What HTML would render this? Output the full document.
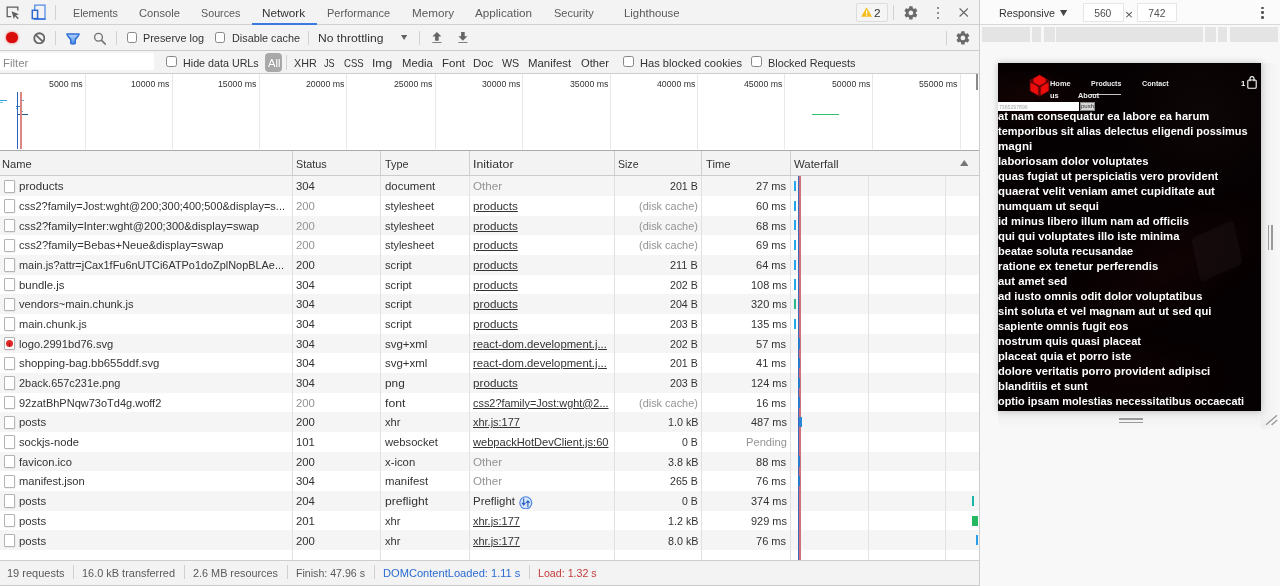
<!DOCTYPE html>
<html lang="en"><head><meta charset="utf-8"><title>DevTools - Network</title>
<style>
html,body{margin:0;padding:0;}
body{width:1280px;height:586px;overflow:hidden;position:relative;background:#f8f8f8;font-family:"Liberation Sans",sans-serif;font-size:11.24px;}
.t{position:absolute;white-space:pre;line-height:1;transform-origin:0 50%;}
#txt{position:absolute;left:0;top:0;width:1280px;height:586px;will-change:transform;filter:blur(0.3px);}
.a{position:absolute;}
</style></head>
<body>
<div class="a" style="left:979.40px;top:0.00px;width:300.60px;height:24.40px;background:#fbfbfb;"></div>
<div class="a" style="left:979.40px;top:24.25px;width:300.60px;height:1.00px;background:#d8d8d8;"></div>
<div class="a" style="left:0.00px;top:0.00px;width:978.50px;height:25.00px;background:#f3f3f3;"></div>
<div class="a" style="left:0.00px;top:24.25px;width:978.50px;height:1.00px;background:#d0d0d0;"></div>
<div class="a" style="left:0.00px;top:25.20px;width:978.50px;height:24.80px;background:#f3f3f3;"></div>
<div class="a" style="left:0.00px;top:50.00px;width:978.50px;height:1.00px;background:#cdcdcd;"></div>
<div class="a" style="left:0.00px;top:51.00px;width:978.50px;height:22.30px;background:#f3f3f3;"></div>
<div class="a" style="left:0.00px;top:73.20px;width:978.50px;height:1.00px;background:#cdcdcd;"></div>
<div class="a" style="left:0.00px;top:74.20px;width:978.50px;height:75.40px;background:#fff;"></div>
<div class="a" style="left:0.00px;top:149.50px;width:978.50px;height:1.40px;background:#aaa;"></div>
<div class="a" style="left:0.00px;top:150.90px;width:978.50px;height:24.20px;background:#f3f3f3;"></div>
<div class="a" style="left:0.00px;top:175.00px;width:978.50px;height:0.90px;background:#cbcbcb;"></div>
<div class="a" style="left:0.00px;top:175.90px;width:978.50px;height:384.30px;background:#fff;"></div>
<div class="a" style="left:0.00px;top:176.20px;width:978.50px;height:19.68px;background:#f5f5f5;"></div>
<div class="a" style="left:0.00px;top:215.56px;width:978.50px;height:19.68px;background:#f5f5f5;"></div>
<div class="a" style="left:0.00px;top:254.92px;width:978.50px;height:19.68px;background:#f5f5f5;"></div>
<div class="a" style="left:0.00px;top:294.28px;width:978.50px;height:19.68px;background:#f5f5f5;"></div>
<div class="a" style="left:0.00px;top:333.64px;width:978.50px;height:19.68px;background:#f5f5f5;"></div>
<div class="a" style="left:0.00px;top:373.00px;width:978.50px;height:19.68px;background:#f5f5f5;"></div>
<div class="a" style="left:0.00px;top:412.36px;width:978.50px;height:19.68px;background:#f5f5f5;"></div>
<div class="a" style="left:0.00px;top:451.72px;width:978.50px;height:19.68px;background:#f5f5f5;"></div>
<div class="a" style="left:0.00px;top:491.08px;width:978.50px;height:19.68px;background:#f5f5f5;"></div>
<div class="a" style="left:0.00px;top:530.44px;width:978.50px;height:19.68px;background:#f5f5f5;"></div>
<div class="a" style="left:0.00px;top:560.00px;width:978.50px;height:1.00px;background:#cdcdcd;"></div>
<div class="a" style="left:0.00px;top:561.00px;width:978.50px;height:24.20px;background:#f3f3f3;"></div>
<div class="a" style="left:0.00px;top:585.10px;width:978.50px;height:0.90px;background:#cbcbcb;"></div>
<div class="a" style="left:978.50px;top:0.00px;width:1.10px;height:586.00px;background:#cdcdcd;"></div>
<div class="a" style="left:251.80px;top:23.00px;width:65.40px;height:2.00px;background:#3b7be0;"></div>
<div class="a" style="left:54.80px;top:4.70px;width:1.00px;height:14.90px;background:#d2d2d2;"></div>
<div class="a" style="left:893.10px;top:4.70px;width:1.00px;height:14.90px;background:#d2d2d2;"></div>
<div class="a" style="left:54.80px;top:30.60px;width:1.00px;height:14.10px;background:#d2d2d2;"></div>
<div class="a" style="left:116.00px;top:30.60px;width:1.00px;height:14.10px;background:#d2d2d2;"></div>
<div class="a" style="left:307.80px;top:30.60px;width:1.00px;height:14.10px;background:#d2d2d2;"></div>
<div class="a" style="left:419.10px;top:30.60px;width:1.00px;height:14.10px;background:#d2d2d2;"></div>
<div class="a" style="left:945.50px;top:30.60px;width:1.00px;height:14.10px;background:#d2d2d2;"></div>
<div class="a" style="left:285.80px;top:55.00px;width:1.00px;height:15.00px;background:#d2d2d2;"></div>
<div class="a" style="left:73.00px;top:564.60px;width:1.00px;height:14.80px;background:#cfcfcf;"></div>
<div class="a" style="left:184.00px;top:564.60px;width:1.00px;height:14.80px;background:#cfcfcf;"></div>
<div class="a" style="left:286.50px;top:564.60px;width:1.00px;height:14.80px;background:#cfcfcf;"></div>
<div class="a" style="left:373.70px;top:564.60px;width:1.00px;height:14.80px;background:#cfcfcf;"></div>
<div class="a" style="left:528.90px;top:564.60px;width:1.00px;height:14.80px;background:#cfcfcf;"></div>
<div class="a" style="left:0.00px;top:53.40px;width:154.00px;height:16.80px;background:#fff;"></div>
<div class="a" style="left:265.10px;top:53.20px;width:17.30px;height:19.20px;background:#a9a9a9;border-radius:4px;"></div>
<div class="a" style="left:126.90px;top:32.00px;width:8.60px;height:8.60px;background:#fff;border:1.2px solid #878787;border-radius:2.5px;"></div>
<div class="a" style="left:214.90px;top:32.00px;width:8.60px;height:8.60px;background:#fff;border:1.2px solid #878787;border-radius:2.5px;"></div>
<div class="a" style="left:166.10px;top:56.10px;width:9.00px;height:9.00px;background:#fff;border:1.2px solid #878787;border-radius:2.5px;"></div>
<div class="a" style="left:623.30px;top:56.10px;width:9.00px;height:9.00px;background:#fff;border:1.2px solid #878787;border-radius:2.5px;"></div>
<div class="a" style="left:751.20px;top:56.10px;width:9.00px;height:9.00px;background:#fff;border:1.2px solid #878787;border-radius:2.5px;"></div>
<div class="a" style="left:84.90px;top:74.20px;width:1.00px;height:75.30px;background:#e8e8e8;"></div>
<div class="a" style="left:171.90px;top:74.20px;width:1.00px;height:75.30px;background:#e8e8e8;"></div>
<div class="a" style="left:258.90px;top:74.20px;width:1.00px;height:75.30px;background:#e8e8e8;"></div>
<div class="a" style="left:346.30px;top:74.20px;width:1.00px;height:75.30px;background:#e8e8e8;"></div>
<div class="a" style="left:434.90px;top:74.20px;width:1.00px;height:75.30px;background:#e8e8e8;"></div>
<div class="a" style="left:522.30px;top:74.20px;width:1.00px;height:75.30px;background:#e8e8e8;"></div>
<div class="a" style="left:610.10px;top:74.20px;width:1.00px;height:75.30px;background:#e8e8e8;"></div>
<div class="a" style="left:697.10px;top:74.20px;width:1.00px;height:75.30px;background:#e8e8e8;"></div>
<div class="a" style="left:784.10px;top:74.20px;width:1.00px;height:75.30px;background:#e8e8e8;"></div>
<div class="a" style="left:872.00px;top:74.20px;width:1.00px;height:75.30px;background:#e8e8e8;"></div>
<div class="a" style="left:959.90px;top:74.20px;width:1.00px;height:75.30px;background:#e8e8e8;"></div>
<div class="a" style="left:0.00px;top:100.00px;width:6.50px;height:1.20px;background:#36a3e0;"></div>
<div class="a" style="left:0.00px;top:101.60px;width:3.00px;height:1.00px;background:#7cc4ec;"></div>
<div class="a" style="left:15.50px;top:105.50px;width:4.00px;height:1.20px;background:#2a7fc0;"></div>
<div class="a" style="left:15.50px;top:108.00px;width:2.00px;height:1.00px;background:#5aa9dc;"></div>
<div class="a" style="left:20.50px;top:99.80px;width:3.00px;height:1.00px;background:#5aa9dc;"></div>
<div class="a" style="left:18.00px;top:113.60px;width:9.80px;height:1.30px;background:#1f5f8f;"></div>
<div class="a" style="left:21.00px;top:111.00px;width:2.00px;height:1.00px;background:#5aa9dc;"></div>
<div class="a" style="left:16.70px;top:92.40px;width:1.30px;height:57.10px;background:#2f62b4;"></div>
<div class="a" style="left:20.20px;top:92.40px;width:1.70px;height:57.10px;background:#dc8585;"></div>
<div class="a" style="left:812.30px;top:113.50px;width:26.30px;height:1.60px;background:#2fc06a;"></div>
<div class="a" style="left:976.20px;top:73.80px;width:1.80px;height:16.70px;background:#8a8a8a;"></div>
<div class="a" style="left:292.00px;top:150.90px;width:1.00px;height:24.20px;background:#cfcfcf;"></div>
<div class="a" style="left:292.00px;top:175.90px;width:1.00px;height:384.20px;background:#e1e1e1;"></div>
<div class="a" style="left:379.80px;top:150.90px;width:1.00px;height:24.20px;background:#cfcfcf;"></div>
<div class="a" style="left:379.80px;top:175.90px;width:1.00px;height:384.20px;background:#e1e1e1;"></div>
<div class="a" style="left:468.90px;top:150.90px;width:1.00px;height:24.20px;background:#cfcfcf;"></div>
<div class="a" style="left:468.90px;top:175.90px;width:1.00px;height:384.20px;background:#e1e1e1;"></div>
<div class="a" style="left:614.00px;top:150.90px;width:1.00px;height:24.20px;background:#cfcfcf;"></div>
<div class="a" style="left:614.00px;top:175.90px;width:1.00px;height:384.20px;background:#e1e1e1;"></div>
<div class="a" style="left:701.40px;top:150.90px;width:1.00px;height:24.20px;background:#cfcfcf;"></div>
<div class="a" style="left:701.40px;top:175.90px;width:1.00px;height:384.20px;background:#e1e1e1;"></div>
<div class="a" style="left:789.90px;top:150.90px;width:1.00px;height:24.20px;background:#cfcfcf;"></div>
<div class="a" style="left:789.90px;top:175.90px;width:1.00px;height:384.20px;background:#e1e1e1;"></div>
<div class="a" style="left:867.70px;top:175.90px;width:1.00px;height:384.20px;background:#e3e3e3;"></div>
<div class="a" style="left:945.10px;top:175.90px;width:1.00px;height:384.20px;background:#e3e3e3;"></div>
<div class="a" style="left:798.30px;top:175.90px;width:2.30px;height:384.20px;background:linear-gradient(90deg,#3f68b8 0,#3f68b8 50%,#d0707a 50%,#d0707a 100%);"></div>
<div class="a" style="left:794.00px;top:180.94px;width:2.40px;height:10.20px;background:#27a5ea;"></div>
<div class="a" style="left:794.00px;top:200.62px;width:2.40px;height:10.20px;background:#27a5ea;"></div>
<div class="a" style="left:794.00px;top:220.30px;width:2.40px;height:10.20px;background:#27a5ea;"></div>
<div class="a" style="left:794.00px;top:239.98px;width:2.40px;height:10.20px;background:#27a5ea;"></div>
<div class="a" style="left:794.00px;top:259.66px;width:2.40px;height:10.20px;background:#27a5ea;"></div>
<div class="a" style="left:794.00px;top:279.34px;width:2.40px;height:10.20px;background:#27a5ea;"></div>
<div class="a" style="left:794.00px;top:299.02px;width:2.40px;height:10.20px;background:#2bb98c;"></div>
<div class="a" style="left:794.00px;top:318.70px;width:2.40px;height:10.20px;background:#27a5ea;"></div>
<div class="a" style="left:797.90px;top:338.38px;width:1.80px;height:10.20px;background:#2b7dc9;"></div>
<div class="a" style="left:797.90px;top:358.06px;width:1.80px;height:10.20px;background:#2b7dc9;"></div>
<div class="a" style="left:797.90px;top:377.74px;width:1.80px;height:10.20px;background:#2b7dc9;"></div>
<div class="a" style="left:797.90px;top:397.42px;width:1.80px;height:10.20px;background:#2b7dc9;"></div>
<div class="a" style="left:797.90px;top:456.46px;width:1.80px;height:10.20px;background:#2b7dc9;"></div>
<div class="a" style="left:797.90px;top:476.14px;width:1.80px;height:10.20px;background:#2b7dc9;"></div>
<div class="a" style="left:799.40px;top:417.10px;width:2.80px;height:10.20px;background:#2b86d4;"></div>
<div class="a" style="left:971.80px;top:495.82px;width:1.80px;height:10.20px;background:#19b5a5;"></div>
<div class="a" style="left:972.00px;top:515.50px;width:5.60px;height:10.20px;background:#24b860;"></div>
<div class="a" style="left:975.80px;top:535.18px;width:2.40px;height:10.20px;background:#2a9ce8;"></div>
<svg class="a" style="left:959.8px;top:159.8px" width="8.6" height="6" viewBox="0 0 8.6 6"><path d="M4.3 0 L8.6 6 L0 6 Z" fill="#777"/></svg>
<div class="a" style="left:4.2px;top:179.50px;width:8.7px;height:11.4px;background:#fff;border:1px solid #b4b4b4;border-radius:1px;box-shadow:0.4px 0.6px 0 rgba(0,0,0,.10);"></div>
<div class="a" style="left:4.2px;top:199.18px;width:8.7px;height:11.4px;background:#fff;border:1px solid #b4b4b4;border-radius:1px;box-shadow:0.4px 0.6px 0 rgba(0,0,0,.10);"></div>
<div class="a" style="left:4.2px;top:218.86px;width:8.7px;height:11.4px;background:#fff;border:1px solid #b4b4b4;border-radius:1px;box-shadow:0.4px 0.6px 0 rgba(0,0,0,.10);"></div>
<div class="a" style="left:4.2px;top:238.54px;width:8.7px;height:11.4px;background:#fff;border:1px solid #b4b4b4;border-radius:1px;box-shadow:0.4px 0.6px 0 rgba(0,0,0,.10);"></div>
<div class="a" style="left:4.2px;top:258.22px;width:8.7px;height:11.4px;background:#fff;border:1px solid #b4b4b4;border-radius:1px;box-shadow:0.4px 0.6px 0 rgba(0,0,0,.10);"></div>
<div class="a" style="left:4.2px;top:277.90px;width:8.7px;height:11.4px;background:#fff;border:1px solid #b4b4b4;border-radius:1px;box-shadow:0.4px 0.6px 0 rgba(0,0,0,.10);"></div>
<div class="a" style="left:4.2px;top:297.58px;width:8.7px;height:11.4px;background:#fff;border:1px solid #b4b4b4;border-radius:1px;box-shadow:0.4px 0.6px 0 rgba(0,0,0,.10);"></div>
<div class="a" style="left:4.2px;top:317.26px;width:8.7px;height:11.4px;background:#fff;border:1px solid #b4b4b4;border-radius:1px;box-shadow:0.4px 0.6px 0 rgba(0,0,0,.10);"></div>
<div class="a" style="left:4.2px;top:336.94px;width:8.7px;height:11.4px;background:#fff;border:1px solid #b4b4b4;border-radius:1px;box-shadow:0.4px 0.6px 0 rgba(0,0,0,.10);"></div>
<div class="a" style="left:5.9px;top:340.24px;width:7.0px;height:7.0px;background:#e32626;border-radius:50%;"></div>
<div class="a" style="left:9.0px;top:343.34px;width:0.9px;height:3.4px;background:#a01010;"></div>
<div class="a" style="left:4.2px;top:356.62px;width:8.7px;height:11.4px;background:#fff;border:1px solid #b4b4b4;border-radius:1px;box-shadow:0.4px 0.6px 0 rgba(0,0,0,.10);"></div>
<div class="a" style="left:4.2px;top:376.30px;width:8.7px;height:11.4px;background:#fff;border:1px solid #b4b4b4;border-radius:1px;box-shadow:0.4px 0.6px 0 rgba(0,0,0,.10);"></div>
<div class="a" style="left:4.2px;top:395.98px;width:8.7px;height:11.4px;background:#fff;border:1px solid #b4b4b4;border-radius:1px;box-shadow:0.4px 0.6px 0 rgba(0,0,0,.10);"></div>
<div class="a" style="left:4.2px;top:415.66px;width:8.7px;height:11.4px;background:#fff;border:1px solid #b4b4b4;border-radius:1px;box-shadow:0.4px 0.6px 0 rgba(0,0,0,.10);"></div>
<div class="a" style="left:4.2px;top:435.34px;width:8.7px;height:11.4px;background:#fff;border:1px solid #b4b4b4;border-radius:1px;box-shadow:0.4px 0.6px 0 rgba(0,0,0,.10);"></div>
<div class="a" style="left:4.2px;top:455.02px;width:8.7px;height:11.4px;background:#fff;border:1px solid #b4b4b4;border-radius:1px;box-shadow:0.4px 0.6px 0 rgba(0,0,0,.10);"></div>
<div class="a" style="left:4.2px;top:474.70px;width:8.7px;height:11.4px;background:#fff;border:1px solid #b4b4b4;border-radius:1px;box-shadow:0.4px 0.6px 0 rgba(0,0,0,.10);"></div>
<div class="a" style="left:4.2px;top:494.38px;width:8.7px;height:11.4px;background:#fff;border:1px solid #b4b4b4;border-radius:1px;box-shadow:0.4px 0.6px 0 rgba(0,0,0,.10);"></div>
<div class="a" style="left:4.2px;top:514.06px;width:8.7px;height:11.4px;background:#fff;border:1px solid #b4b4b4;border-radius:1px;box-shadow:0.4px 0.6px 0 rgba(0,0,0,.10);"></div>
<div class="a" style="left:4.2px;top:533.74px;width:8.7px;height:11.4px;background:#fff;border:1px solid #b4b4b4;border-radius:1px;box-shadow:0.4px 0.6px 0 rgba(0,0,0,.10);"></div>
<svg class="a" style="left:519.0px;top:495.68px" width="13.6" height="13.6" viewBox="0 0 13.6 13.6"><circle cx="6.8" cy="6.8" r="6.0" fill="#d6e6fb" stroke="#4a84e0" stroke-width="1.15"/><path d="M4.7 2.6 V8.6 M3.0 6.9 L4.7 8.9 L6.4 6.9 M8.9 11.2 V5.2 M7.2 6.9 L8.9 4.9 L10.6 6.9" stroke="#2458b8" stroke-width="1.05" fill="none"/></svg>
<svg class="a" style="left:5.5px;top:5.6px" width="14" height="14" viewBox="0 0 14 14"><path d="M5.2 10.6 H1.2 V1.2 H11.8 V4.6" fill="none" stroke="#5f5f5f" stroke-width="1.3"/><path d="M5.6 5.2 L13 8.2 L10 9.2 L12.8 12.2 L11.8 13.2 L9 10.2 L7.8 13 Z" fill="#5f5f5f"/></svg>
<svg class="a" style="left:30.6px;top:4.0px" width="15.4" height="16" viewBox="0 0 15.4 16"><rect x="3.8" y="1.1" width="10.2" height="13.9" fill="none" stroke="#4a84e6" stroke-width="1.2"/><path d="M3.2 15 H14.6" stroke="#3a73dc" stroke-width="1.6"/><rect x="1.3" y="6.3" width="5.3" height="8.3" fill="#f3f3f3" stroke="#2f68d0" stroke-width="1.5"/></svg>
<div class="a" style="left:856.2px;top:3.1px;width:29.9px;height:17.1px;border:1px solid #ddd;border-radius:2px;background:#f5f5f5;"></div>
<svg class="a" style="left:861.3px;top:6.8px" width="11.2" height="10" viewBox="0 0 11.2 10"><path d="M5.6 0.3 L11 9.7 H0.2 Z" fill="#f5bd1a"/><rect x="5.0" y="3.4" width="1.3" height="3.4" fill="#fff"/><rect x="5.0" y="7.5" width="1.3" height="1.2" fill="#fff"/></svg>
<svg class="a" style="left:902.9px;top:4.5px" width="15.8" height="15.8" viewBox="0 0 24 24"><path fill="#6a6a6a" d="M19.43 12.98c.04-.32.07-.64.07-.98s-.03-.66-.07-.98l2.11-1.65c.19-.15.24-.42.12-.64l-2-3.46c-.12-.22-.39-.3-.61-.22l-2.49 1c-.52-.4-1.08-.73-1.69-.98l-.38-2.65C14.46 2.18 14.25 2 14 2h-4c-.25 0-.46.18-.49.42l-.38 2.65c-.61.25-1.17.59-1.69.98l-2.49-1c-.23-.09-.49 0-.61.22l-2 3.46c-.13.22-.07.49.12.64l2.11 1.65c-.04.32-.07.65-.07.98s.03.66.07.98l-2.11 1.65c-.19.15-.24.42-.12.64l2 3.46c.12.22.39.3.61.22l2.49-1c.52.4 1.08.73 1.69.98l.38 2.65c.03.24.24.42.49.42h4c.25 0 .46-.18.49-.42l.38-2.65c.61-.25 1.17-.59 1.69-.98l2.49 1c.23.09.49 0 .61-.22l2-3.46c.12-.22.07-.49-.12-.64l-2.11-1.65zM12 15.5c-1.93 0-3.5-1.57-3.5-3.5s1.570-3.5 3.5-3.5 3.5 1.57 3.5 3.5-1.57 3.5-3.5 3.5z"/></svg>
<svg class="a" style="left:955.3px;top:29.9px" width="15.8" height="15.8" viewBox="0 0 24 24"><path fill="#6a6a6a" d="M19.43 12.98c.04-.32.07-.64.07-.98s-.03-.66-.07-.98l2.11-1.65c.19-.15.24-.42.12-.64l-2-3.46c-.12-.22-.39-.3-.61-.22l-2.49 1c-.52-.4-1.08-.73-1.69-.98l-.38-2.65C14.46 2.18 14.25 2 14 2h-4c-.25 0-.46.18-.49.42l-.38 2.65c-.61.25-1.17.59-1.69.98l-2.49-1c-.23-.09-.49 0-.61.22l-2 3.46c-.13.22-.07.49.12.64l2.11 1.65c-.04.32-.07.65-.07.98s.03.66.07.98l-2.11 1.65c-.19.15-.24.42-.12.64l2 3.46c.12.22.39.3.61.22l2.49-1c.52.4 1.08.73 1.69.98l.38 2.65c.03.24.24.42.49.42h4c.25 0 .46-.18.49-.42l.38-2.65c.61-.25 1.17-.59 1.69-.98l2.49 1c.23.09.49 0 .61-.22l2-3.46c.12-.22.07-.49-.12-.64l-2.11-1.65zM12 15.5c-1.93 0-3.5-1.57-3.5-3.5s1.570-3.5 3.5-3.5 3.5 1.57 3.5 3.5-1.57 3.5-3.5 3.5z"/></svg>
<div class="a" style="left:936.50px;top:6.50px;width:2.4px;height:2.4px;border-radius:50%;background:#6e6e6e;"></div>
<div class="a" style="left:936.50px;top:11.70px;width:2.4px;height:2.4px;border-radius:50%;background:#6e6e6e;"></div>
<div class="a" style="left:936.50px;top:16.90px;width:2.4px;height:2.4px;border-radius:50%;background:#6e6e6e;"></div>
<div class="a" style="left:1261.25px;top:6.60px;width:2.5px;height:2.5px;border-radius:50%;background:#555;"></div>
<div class="a" style="left:1261.25px;top:11.40px;width:2.5px;height:2.5px;border-radius:50%;background:#555;"></div>
<div class="a" style="left:1261.25px;top:16.25px;width:2.5px;height:2.5px;border-radius:50%;background:#555;"></div>
<svg class="a" style="left:958.8px;top:8.1px" width="9.6" height="9" viewBox="0 0 9.6 9"><path d="M0.6 0.5 L9 8.5 M9 0.5 L0.6 8.5" stroke="#666" stroke-width="1.15" fill="none"/></svg>
<div class="a" style="left:6.3px;top:31.6px;width:11.4px;height:11.4px;border-radius:50%;background:#d90b0b;box-shadow:0 0 2.5px rgba(230,40,40,.8);"></div>
<svg class="a" style="left:32.5px;top:31.6px" width="12.6" height="12.6" viewBox="0 0 12.6 12.6"><circle cx="6.3" cy="6.3" r="5.05" fill="none" stroke="#666" stroke-width="1.8"/><path d="M2.7 2.9 L9.9 9.7" stroke="#666" stroke-width="1.8"/></svg>
<svg class="a" style="left:66.4px;top:32.9px" width="14" height="11.8" viewBox="0 0 14 11.8"><defs><linearGradient id="fg" x1="0" y1="0" x2="0" y2="1"><stop offset="0" stop-color="#b6d4fa"/><stop offset="0.55" stop-color="#7fb0f0"/><stop offset="1" stop-color="#3f86e2"/></linearGradient></defs><path d="M0.9 1.0 H13.1 C12.7 3.8 9.7 4.7 9.2 7.0 V10.6 Q7 11.4 4.8 10.6 V7.0 C4.3 4.7 1.3 3.8 0.9 1.0 Z" fill="url(#fg)" stroke="#2f6fd8" stroke-width="1.5" stroke-linejoin="round"/></svg>
<svg class="a" style="left:92.6px;top:31.7px" width="13.6" height="13.4" viewBox="0 0 13.6 13.4"><circle cx="5.5" cy="5.3" r="3.9" fill="none" stroke="#707070" stroke-width="1.35"/><path d="M8.3 8.2 L12.8 12.6" stroke="#707070" stroke-width="1.6"/></svg>
<svg class="a" style="left:401.2px;top:35.2px" width="6.2" height="5" viewBox="0 0 6.2 5"><path d="M0 0 H6.2 L3.1 5 Z" fill="#616161"/></svg>
<svg class="a" style="left:1060.2px;top:9.6px" width="7.2" height="6.2" viewBox="0 0 7.2 6.2"><path d="M0 0 H7.2 L3.6 6.2 Z" fill="#444"/></svg>
<svg class="a" style="left:431.8px;top:31.8px" width="9.8" height="11.4" viewBox="0 0 9.8 11.4"><path d="M4.9 0 L9.4 4.6 H6.7 V8.8 H3.1 V4.6 H0.4 Z" fill="#666"/><rect x="0.3" y="10.2" width="9.2" height="1.1" fill="#666"/></svg>
<svg class="a" style="left:458.0px;top:31.8px" width="9.8" height="11.4" viewBox="0 0 9.8 11.4"><path d="M3.1 0 H6.7 V4.2 H9.4 L4.9 8.8 L0.4 4.2 H3.1 Z" fill="#666"/><rect x="0.3" y="10.2" width="9.2" height="1.1" fill="#666"/></svg>
<div class="a" style="left:1083.00px;top:3.3px;width:38.50px;height:17.2px;background:#fff;border:0.5px solid #e6e6e6;"></div>
<div class="a" style="left:1136.50px;top:3.3px;width:38.90px;height:17.2px;background:#fff;border:0.5px solid #e6e6e6;"></div>
<div class="a" style="left:981.90px;top:27.20px;width:48.00px;height:14.50px;background:#e4e4e4;"></div>
<div class="a" style="left:1032.00px;top:27.20px;width:9.40px;height:14.50px;background:#e4e4e4;"></div>
<div class="a" style="left:1043.50px;top:27.20px;width:11.50px;height:14.50px;background:#e4e4e4;"></div>
<div class="a" style="left:1056.20px;top:27.20px;width:146.70px;height:14.50px;background:#e4e4e4;"></div>
<div class="a" style="left:1205.20px;top:27.20px;width:10.90px;height:14.50px;background:#e4e4e4;"></div>
<div class="a" style="left:1218.10px;top:27.20px;width:9.30px;height:14.50px;background:#e4e4e4;"></div>
<div class="a" style="left:1229.60px;top:27.20px;width:48.30px;height:14.50px;background:#e4e4e4;"></div>
<div class="a" style="left:998.30px;top:410.40px;width:262.90px;height:18.60px;background:linear-gradient(#ececec,#f2f2f2 45%,#f8f8f8);"></div>
<div class="a" style="left:1261.20px;top:63.00px;width:17.60px;height:366.00px;background:linear-gradient(90deg,#eeeeee,#f3f3f3 45%,#f8f8f8);"></div>
<div class="a" style="left:1119.00px;top:418.40px;width:24.20px;height:1.30px;background:#9a9a9a;"></div>
<div class="a" style="left:1119.00px;top:421.50px;width:24.20px;height:1.30px;background:#9a9a9a;"></div>
<div class="a" style="left:1268.20px;top:225.00px;width:1.30px;height:25.00px;background:#9a9a9a;"></div>
<div class="a" style="left:1271.30px;top:225.00px;width:1.30px;height:25.00px;background:#9a9a9a;"></div>
<svg class="a" style="left:1264.5px;top:414.0px" width="13" height="12.4" viewBox="0 0 13 12.4"><path d="M1 10.8 L12 1.2 M6.6 11 L12.2 6" stroke="#999" stroke-width="1.4" fill="none"/></svg>
<div class="a" style="left:998.3px;top:63.0px;width:262.9px;height:347.5px;background:#050001;box-shadow:0 0 7px rgba(0,0,0,.22);overflow:hidden;"><div class="a" style="left:-20px;top:0px;width:120px;height:70px;background:radial-gradient(ellipse at 40% 50%,rgba(40,8,8,.40),rgba(10,2,2,0) 70%);"></div><div class="a" style="left:110px;top:-10px;width:170px;height:150px;background:radial-gradient(ellipse at 55% 40%,rgba(30,20,20,.32),rgba(10,2,2,0) 68%);"></div><div class="a" style="left:40px;top:150px;width:260px;height:110px;transform:rotate(-28deg);background:radial-gradient(ellipse at 50% 50%,rgba(36,8,10,.38),rgba(10,2,2,0) 70%);"></div><div class="a" style="left:196px;top:166px;width:46px;height:44px;transform:rotate(-24deg) skewX(-12deg);background:rgba(255,255,255,.035);border-radius:4px;"></div><div class="a" style="left:40px;top:270px;width:200px;height:90px;background:radial-gradient(ellipse at 50% 50%,rgba(28,6,8,.32),rgba(10,2,2,0) 70%);"></div></div>
<svg class="a" style="left:1028.6px;top:73.8px" width="21" height="23.2" viewBox="0 0 21 23.2"><path d="M10.5 0.4 L20.4 5.9 V17.2 L10.5 22.8 L0.6 17.2 V5.9 Z" fill="#5e0606"/><path d="M10.5 1.6 L16.2 4.9 V8.2 L10.5 11.3 L4.8 8.2 V4.9 Z" fill="#ee0d0d" stroke="#ee0d0d" stroke-width="0.8" stroke-linejoin="round"/><path d="M1.9 9.4 L4.4 10.3 L8.9 13.2 V20.6 L1.9 16.6 Z" fill="#ee0d0d" stroke="#ee0d0d" stroke-width="0.8" stroke-linejoin="round"/><path d="M19.1 9.4 L16.6 10.3 L12.1 13.2 V20.6 L19.1 16.6 Z" fill="#ee0d0d" stroke="#ee0d0d" stroke-width="0.8" stroke-linejoin="round"/></svg>
<div class="a" style="left:1090.00px;top:93.50px;width:31.40px;height:1.00px;background:#c4c4c4;"></div>
<svg class="a" style="left:1247.0px;top:76.4px" width="10" height="13" viewBox="0 0 10 13"><rect x="0.8" y="4" width="8.4" height="8.2" rx="1" fill="none" stroke="#fff" stroke-width="1.1"/><path d="M3 5.2 V2.6 A2 2 0 0 1 7 2.6 V5.2" fill="none" stroke="#fff" stroke-width="1.1"/></svg>
<div class="a" style="left:998.30px;top:102.10px;width:80.80px;height:8.60px;background:#fff;"></div>
<div class="a" style="left:1079.60px;top:102.10px;width:15.00px;height:8.60px;background:#d6d6d6;border:0.6px solid #8a8a8a;box-sizing:border-box;"></div>
<div id="txt">
<span class="t" style="left:72.80px;top:6.98px;font-size:11.6px;color:#5a5a5a;transform:scaleX(0.9291);">Elements</span>
<span class="t" style="left:139.00px;top:6.98px;font-size:11.6px;color:#5a5a5a;transform:scaleX(0.9636);">Console</span>
<span class="t" style="left:200.90px;top:6.98px;font-size:11.6px;color:#5a5a5a;transform:scaleX(0.9264);">Sources</span>
<span class="t" style="left:262.10px;top:6.98px;font-size:11.6px;color:#333;transform:scaleX(1.0134);">Network</span>
<span class="t" style="left:327.20px;top:6.98px;font-size:11.6px;color:#5a5a5a;transform:scaleX(0.9507);">Performance</span>
<span class="t" style="left:411.50px;top:6.98px;font-size:11.6px;color:#5a5a5a;transform:scaleX(1.0078);">Memory</span>
<span class="t" style="left:475.10px;top:6.98px;font-size:11.6px;color:#5a5a5a;transform:scaleX(1.0067);">Application</span>
<span class="t" style="left:553.90px;top:6.98px;font-size:11.6px;color:#5a5a5a;transform:scaleX(0.9501);">Security</span>
<span class="t" style="left:624.40px;top:6.98px;font-size:11.6px;color:#5a5a5a;transform:scaleX(0.9800);">Lighthouse</span>
<span class="t" style="left:874.30px;top:6.98px;font-size:11.6px;color:#333;transform:scaleX(1.0228);">2</span>
<span class="t" style="left:999.20px;top:6.98px;font-size:11.6px;color:#333;transform:scaleX(0.9258);">Responsive</span>
<span class="t" style="left:1083.00px;top:6.98px;font-size:11.6px;color:#505050;transform:scaleX(0.8900);text-align:center;transform-origin:50% 50%;width:39.5px;">560</span>
<span class="t" style="left:1136.50px;top:6.98px;font-size:11.6px;color:#505050;transform:scaleX(0.8900);text-align:center;transform-origin:50% 50%;width:39.9px;">742</span>
<span class="t" style="left:1125.28px;top:8.64px;font-size:12px;color:#555;transform:scaleX(1.1452);">×</span>
<span class="t" style="left:143.40px;top:31.98px;font-size:11.6px;color:#333;transform:scaleX(0.9371);">Preserve log</span>
<span class="t" style="left:232.00px;top:31.98px;font-size:11.6px;color:#333;transform:scaleX(0.9337);">Disable cache</span>
<span class="t" style="left:318.30px;top:31.98px;font-size:11.6px;color:#333;transform:scaleX(1.0461);">No throttling</span>
<span class="t" style="left:3.30px;top:56.88px;font-size:11.6px;color:#8a8a8a;transform:scaleX(0.9819);">Filter</span>
<span class="t" style="left:183.00px;top:56.68px;font-size:11.6px;color:#333;transform:scaleX(0.9249);">Hide data URLs</span>
<span class="t" style="left:267.70px;top:56.68px;font-size:11.6px;color:#fff;transform:scaleX(0.9619);text-shadow:0 0 1px rgba(0,0,0,.4),0 0 0.5px #fff;">All</span>
<span class="t" style="left:293.50px;top:56.68px;font-size:11.6px;color:#333;transform:scaleX(0.9271);">XHR</span>
<span class="t" style="left:324.40px;top:56.68px;font-size:11.6px;color:#333;transform:scaleX(0.7834);">JS</span>
<span class="t" style="left:344.00px;top:56.68px;font-size:11.6px;color:#333;transform:scaleX(0.8220);">CSS</span>
<span class="t" style="left:372.00px;top:56.68px;font-size:11.6px;color:#333;transform:scaleX(1.0399);">Img</span>
<span class="t" style="left:401.70px;top:56.68px;font-size:11.6px;color:#333;transform:scaleX(0.9754);">Media</span>
<span class="t" style="left:441.70px;top:56.68px;font-size:11.6px;color:#333;transform:scaleX(0.9912);">Font</span>
<span class="t" style="left:473.40px;top:56.68px;font-size:11.6px;color:#333;transform:scaleX(0.9842);">Doc</span>
<span class="t" style="left:502.10px;top:56.68px;font-size:11.6px;color:#333;transform:scaleX(0.9204);">WS</span>
<span class="t" style="left:528.30px;top:56.68px;font-size:11.6px;color:#333;transform:scaleX(0.9834);">Manifest</span>
<span class="t" style="left:580.60px;top:56.68px;font-size:11.6px;color:#333;transform:scaleX(0.9621);">Other</span>
<span class="t" style="left:640.40px;top:56.68px;font-size:11.6px;color:#333;transform:scaleX(0.9592);">Has blocked cookies</span>
<span class="t" style="left:768.10px;top:56.68px;font-size:11.6px;color:#333;transform:scaleX(0.9363);">Blocked Requests</span>
<span class="t" style="left:49.14px;top:80.01px;font-size:9.2px;color:#333;transform:scaleX(0.9558);">5000 ms</span>
<span class="t" style="left:131.44px;top:80.01px;font-size:9.2px;color:#333;transform:scaleX(0.9513);">10000 ms</span>
<span class="t" style="left:218.44px;top:80.01px;font-size:9.2px;color:#333;transform:scaleX(0.9513);">15000 ms</span>
<span class="t" style="left:305.84px;top:80.01px;font-size:9.2px;color:#333;transform:scaleX(0.9513);">20000 ms</span>
<span class="t" style="left:394.44px;top:80.01px;font-size:9.2px;color:#333;transform:scaleX(0.9513);">25000 ms</span>
<span class="t" style="left:481.84px;top:80.01px;font-size:9.2px;color:#333;transform:scaleX(0.9513);">30000 ms</span>
<span class="t" style="left:569.64px;top:80.01px;font-size:9.2px;color:#333;transform:scaleX(0.9513);">35000 ms</span>
<span class="t" style="left:656.64px;top:80.01px;font-size:9.2px;color:#333;transform:scaleX(0.9513);">40000 ms</span>
<span class="t" style="left:743.64px;top:80.01px;font-size:9.2px;color:#333;transform:scaleX(0.9513);">45000 ms</span>
<span class="t" style="left:831.54px;top:80.01px;font-size:9.2px;color:#333;transform:scaleX(0.9513);">50000 ms</span>
<span class="t" style="left:919.44px;top:80.01px;font-size:9.2px;color:#333;transform:scaleX(0.9513);">55000 ms</span>
<span class="t" style="left:1.90px;top:157.98px;font-size:11.6px;color:#333;transform:scaleX(0.9568);">Name</span>
<span class="t" style="left:296.20px;top:157.98px;font-size:11.6px;color:#333;transform:scaleX(0.9338);">Status</span>
<span class="t" style="left:384.90px;top:157.98px;font-size:11.6px;color:#333;transform:scaleX(0.9347);">Type</span>
<span class="t" style="left:472.60px;top:157.98px;font-size:11.6px;color:#333;transform:scaleX(1.0649);">Initiator</span>
<span class="t" style="left:618.30px;top:157.98px;font-size:11.6px;color:#333;transform:scaleX(0.9086);">Size</span>
<span class="t" style="left:706.20px;top:157.98px;font-size:11.6px;color:#333;transform:scaleX(0.9628);">Time</span>
<span class="t" style="left:794.30px;top:157.98px;font-size:11.6px;color:#333;transform:scaleX(0.9821);">Waterfall</span>
<span class="t" style="left:19.30px;top:180.28px;font-size:11.6px;color:#333;transform:scaleX(1.0007);">products</span>
<span class="t" style="left:296.20px;top:180.28px;font-size:11.6px;color:#333;transform:scaleX(0.9771);">304</span>
<span class="t" style="left:384.90px;top:180.28px;font-size:11.6px;color:#333;transform:scaleX(0.9858);">document</span>
<span class="t" style="left:472.60px;top:180.28px;font-size:11.6px;color:#939393;transform:scaleX(1.0034);">Other</span>
<span class="t" style="left:670.30px;top:180.28px;font-size:11.6px;color:#333;transform:scaleX(0.9171);">201 B</span>
<span class="t" style="left:756.40px;top:180.28px;font-size:11.6px;color:#333;transform:scaleX(0.9532);">27 ms</span>
<span class="t" style="left:19.30px;top:199.96px;font-size:11.6px;color:#333;transform:scaleX(0.9460);">css2?family=Jost:wght@200;300;400;500&amp;display=s...</span>
<span class="t" style="left:296.20px;top:199.96px;font-size:11.6px;color:#939393;transform:scaleX(0.9771);">200</span>
<span class="t" style="left:384.90px;top:199.96px;font-size:11.6px;color:#333;transform:scaleX(0.9386);">stylesheet</span>
<span class="t" style="left:472.60px;top:199.96px;font-size:11.6px;color:#333;transform:scaleX(1.0074);text-decoration:underline;text-underline-offset:1px;">products</span>
<span class="t" style="left:639.20px;top:199.96px;font-size:11.6px;color:#939393;transform:scaleX(0.9424);">(disk cache)</span>
<span class="t" style="left:756.40px;top:199.96px;font-size:11.6px;color:#333;transform:scaleX(0.9532);">60 ms</span>
<span class="t" style="left:19.30px;top:219.64px;font-size:11.6px;color:#333;transform:scaleX(0.9616);">css2?family=Inter:wght@200;300&amp;display=swap</span>
<span class="t" style="left:296.20px;top:219.64px;font-size:11.6px;color:#939393;transform:scaleX(0.9771);">200</span>
<span class="t" style="left:384.90px;top:219.64px;font-size:11.6px;color:#333;transform:scaleX(0.9386);">stylesheet</span>
<span class="t" style="left:472.60px;top:219.64px;font-size:11.6px;color:#333;transform:scaleX(1.0074);text-decoration:underline;text-underline-offset:1px;">products</span>
<span class="t" style="left:639.20px;top:219.64px;font-size:11.6px;color:#939393;transform:scaleX(0.9424);">(disk cache)</span>
<span class="t" style="left:756.40px;top:219.64px;font-size:11.6px;color:#333;transform:scaleX(0.9532);">68 ms</span>
<span class="t" style="left:19.30px;top:239.32px;font-size:11.6px;color:#333;transform:scaleX(0.9625);">css2?family=Bebas+Neue&amp;display=swap</span>
<span class="t" style="left:296.20px;top:239.32px;font-size:11.6px;color:#939393;transform:scaleX(0.9771);">200</span>
<span class="t" style="left:384.90px;top:239.32px;font-size:11.6px;color:#333;transform:scaleX(0.9386);">stylesheet</span>
<span class="t" style="left:472.60px;top:239.32px;font-size:11.6px;color:#333;transform:scaleX(1.0074);text-decoration:underline;text-underline-offset:1px;">products</span>
<span class="t" style="left:639.20px;top:239.32px;font-size:11.6px;color:#939393;transform:scaleX(0.9424);">(disk cache)</span>
<span class="t" style="left:756.40px;top:239.32px;font-size:11.6px;color:#333;transform:scaleX(0.9532);">69 ms</span>
<span class="t" style="left:19.30px;top:259.00px;font-size:11.6px;color:#333;transform:scaleX(0.9407);">main.js?attr=jCax1fFu6nUTCi6ATPo1doZplNopBLAe...</span>
<span class="t" style="left:296.20px;top:259.00px;font-size:11.6px;color:#333;transform:scaleX(0.9771);">200</span>
<span class="t" style="left:384.90px;top:259.00px;font-size:11.6px;color:#333;transform:scaleX(0.9638);">script</span>
<span class="t" style="left:472.60px;top:259.00px;font-size:11.6px;color:#333;transform:scaleX(1.0074);text-decoration:underline;text-underline-offset:1px;">products</span>
<span class="t" style="left:670.30px;top:259.00px;font-size:11.6px;color:#333;transform:scaleX(0.9444);">211 B</span>
<span class="t" style="left:756.40px;top:259.00px;font-size:11.6px;color:#333;transform:scaleX(0.9532);">64 ms</span>
<span class="t" style="left:19.30px;top:278.68px;font-size:11.6px;color:#333;transform:scaleX(0.9801);">bundle.js</span>
<span class="t" style="left:296.20px;top:278.68px;font-size:11.6px;color:#333;transform:scaleX(0.9771);">304</span>
<span class="t" style="left:384.90px;top:278.68px;font-size:11.6px;color:#333;transform:scaleX(0.9638);">script</span>
<span class="t" style="left:472.60px;top:278.68px;font-size:11.6px;color:#333;transform:scaleX(1.0074);text-decoration:underline;text-underline-offset:1px;">products</span>
<span class="t" style="left:670.30px;top:278.68px;font-size:11.6px;color:#333;transform:scaleX(0.9171);">202 B</span>
<span class="t" style="left:750.60px;top:278.68px;font-size:11.6px;color:#333;transform:scaleX(0.9440);">108 ms</span>
<span class="t" style="left:19.30px;top:298.36px;font-size:11.6px;color:#333;transform:scaleX(0.9638);">vendors~main.chunk.js</span>
<span class="t" style="left:296.20px;top:298.36px;font-size:11.6px;color:#333;transform:scaleX(0.9771);">304</span>
<span class="t" style="left:384.90px;top:298.36px;font-size:11.6px;color:#333;transform:scaleX(0.9638);">script</span>
<span class="t" style="left:472.60px;top:298.36px;font-size:11.6px;color:#333;transform:scaleX(1.0074);text-decoration:underline;text-underline-offset:1px;">products</span>
<span class="t" style="left:670.30px;top:298.36px;font-size:11.6px;color:#333;transform:scaleX(0.9171);">204 B</span>
<span class="t" style="left:750.60px;top:298.36px;font-size:11.6px;color:#333;transform:scaleX(0.9440);">320 ms</span>
<span class="t" style="left:19.30px;top:318.04px;font-size:11.6px;color:#333;transform:scaleX(0.9550);">main.chunk.js</span>
<span class="t" style="left:296.20px;top:318.04px;font-size:11.6px;color:#333;transform:scaleX(0.9771);">304</span>
<span class="t" style="left:384.90px;top:318.04px;font-size:11.6px;color:#333;transform:scaleX(0.9638);">script</span>
<span class="t" style="left:472.60px;top:318.04px;font-size:11.6px;color:#333;transform:scaleX(1.0074);text-decoration:underline;text-underline-offset:1px;">products</span>
<span class="t" style="left:670.30px;top:318.04px;font-size:11.6px;color:#333;transform:scaleX(0.9171);">203 B</span>
<span class="t" style="left:750.60px;top:318.04px;font-size:11.6px;color:#333;transform:scaleX(0.9440);">135 ms</span>
<span class="t" style="left:19.30px;top:337.72px;font-size:11.6px;color:#333;transform:scaleX(0.9622);">logo.2991bd76.svg</span>
<span class="t" style="left:296.20px;top:337.72px;font-size:11.6px;color:#333;transform:scaleX(0.9771);">304</span>
<span class="t" style="left:384.90px;top:337.72px;font-size:11.6px;color:#333;transform:scaleX(0.9896);">svg+xml</span>
<span class="t" style="left:472.60px;top:337.72px;font-size:11.6px;color:#333;transform:scaleX(0.9755);text-decoration:underline;text-underline-offset:1px;">react-dom.development.j...</span>
<span class="t" style="left:670.30px;top:337.72px;font-size:11.6px;color:#333;transform:scaleX(0.9171);">202 B</span>
<span class="t" style="left:756.40px;top:337.72px;font-size:11.6px;color:#333;transform:scaleX(0.9532);">57 ms</span>
<span class="t" style="left:19.30px;top:357.40px;font-size:11.6px;color:#333;transform:scaleX(0.9811);">shopping-bag.bb655ddf.svg</span>
<span class="t" style="left:296.20px;top:357.40px;font-size:11.6px;color:#333;transform:scaleX(0.9771);">304</span>
<span class="t" style="left:384.90px;top:357.40px;font-size:11.6px;color:#333;transform:scaleX(0.9896);">svg+xml</span>
<span class="t" style="left:472.60px;top:357.40px;font-size:11.6px;color:#333;transform:scaleX(0.9755);text-decoration:underline;text-underline-offset:1px;">react-dom.development.j...</span>
<span class="t" style="left:670.30px;top:357.40px;font-size:11.6px;color:#333;transform:scaleX(0.9171);">201 B</span>
<span class="t" style="left:756.40px;top:357.40px;font-size:11.6px;color:#333;transform:scaleX(0.9532);">41 ms</span>
<span class="t" style="left:19.30px;top:377.08px;font-size:11.6px;color:#333;transform:scaleX(0.9410);">2back.657c231e.png</span>
<span class="t" style="left:296.20px;top:377.08px;font-size:11.6px;color:#333;transform:scaleX(0.9771);">304</span>
<span class="t" style="left:384.90px;top:377.08px;font-size:11.6px;color:#333;transform:scaleX(1.0184);">png</span>
<span class="t" style="left:472.60px;top:377.08px;font-size:11.6px;color:#333;transform:scaleX(1.0074);text-decoration:underline;text-underline-offset:1px;">products</span>
<span class="t" style="left:670.30px;top:377.08px;font-size:11.6px;color:#333;transform:scaleX(0.9171);">203 B</span>
<span class="t" style="left:750.60px;top:377.08px;font-size:11.6px;color:#333;transform:scaleX(0.9440);">124 ms</span>
<span class="t" style="left:19.30px;top:396.76px;font-size:11.6px;color:#333;transform:scaleX(0.9489);">92zatBhPNqw73oTd4g.woff2</span>
<span class="t" style="left:296.20px;top:396.76px;font-size:11.6px;color:#939393;transform:scaleX(0.9771);">200</span>
<span class="t" style="left:384.90px;top:396.76px;font-size:11.6px;color:#333;transform:scaleX(1.0546);">font</span>
<span class="t" style="left:472.60px;top:396.76px;font-size:11.6px;color:#333;transform:scaleX(0.9397);text-decoration:underline;text-underline-offset:1px;">css2?family=Jost:wght@2...</span>
<span class="t" style="left:639.20px;top:396.76px;font-size:11.6px;color:#939393;transform:scaleX(0.9424);">(disk cache)</span>
<span class="t" style="left:756.40px;top:396.76px;font-size:11.6px;color:#333;transform:scaleX(0.9532);">16 ms</span>
<span class="t" style="left:19.30px;top:416.44px;font-size:11.6px;color:#333;transform:scaleX(0.9777);">posts</span>
<span class="t" style="left:296.20px;top:416.44px;font-size:11.6px;color:#333;transform:scaleX(0.9771);">200</span>
<span class="t" style="left:384.90px;top:416.44px;font-size:11.6px;color:#333;transform:scaleX(0.9560);">xhr</span>
<span class="t" style="left:472.60px;top:416.44px;font-size:11.6px;color:#333;transform:scaleX(0.9451);text-decoration:underline;text-underline-offset:1px;">xhr.js:177</span>
<span class="t" style="left:667.60px;top:416.44px;font-size:11.6px;color:#333;transform:scaleX(0.9278);">1.0 kB</span>
<span class="t" style="left:750.60px;top:416.44px;font-size:11.6px;color:#333;transform:scaleX(0.9440);">487 ms</span>
<span class="t" style="left:19.30px;top:436.12px;font-size:11.6px;color:#333;transform:scaleX(0.9681);">sockjs-node</span>
<span class="t" style="left:296.20px;top:436.12px;font-size:11.6px;color:#333;transform:scaleX(0.9771);">101</span>
<span class="t" style="left:384.90px;top:436.12px;font-size:11.6px;color:#333;transform:scaleX(0.9657);">websocket</span>
<span class="t" style="left:472.60px;top:436.12px;font-size:11.6px;color:#333;transform:scaleX(0.9557);text-decoration:underline;text-underline-offset:1px;">webpackHotDevClient.js:60</span>
<span class="t" style="left:682.30px;top:436.12px;font-size:11.6px;color:#333;transform:scaleX(0.9077);">0 B</span>
<span class="t" style="left:745.60px;top:436.12px;font-size:11.6px;color:#939393;transform:scaleX(0.9609);">Pending</span>
<span class="t" style="left:19.30px;top:455.80px;font-size:11.6px;color:#333;transform:scaleX(0.9657);">favicon.ico</span>
<span class="t" style="left:296.20px;top:455.80px;font-size:11.6px;color:#333;transform:scaleX(0.9771);">200</span>
<span class="t" style="left:384.90px;top:455.80px;font-size:11.6px;color:#333;transform:scaleX(0.9762);">x-icon</span>
<span class="t" style="left:472.60px;top:455.80px;font-size:11.6px;color:#939393;transform:scaleX(1.0034);">Other</span>
<span class="t" style="left:667.60px;top:455.80px;font-size:11.6px;color:#333;transform:scaleX(0.9278);">3.8 kB</span>
<span class="t" style="left:756.40px;top:455.80px;font-size:11.6px;color:#333;transform:scaleX(0.9532);">88 ms</span>
<span class="t" style="left:19.30px;top:475.48px;font-size:11.6px;color:#333;transform:scaleX(0.9632);">manifest.json</span>
<span class="t" style="left:296.20px;top:475.48px;font-size:11.6px;color:#333;transform:scaleX(0.9771);">304</span>
<span class="t" style="left:384.90px;top:475.48px;font-size:11.6px;color:#333;transform:scaleX(0.9834);">manifest</span>
<span class="t" style="left:472.60px;top:475.48px;font-size:11.6px;color:#939393;transform:scaleX(1.0034);">Other</span>
<span class="t" style="left:670.30px;top:475.48px;font-size:11.6px;color:#333;transform:scaleX(0.9171);">265 B</span>
<span class="t" style="left:756.40px;top:475.48px;font-size:11.6px;color:#333;transform:scaleX(0.9532);">76 ms</span>
<span class="t" style="left:19.30px;top:495.16px;font-size:11.6px;color:#333;transform:scaleX(0.9777);">posts</span>
<span class="t" style="left:296.20px;top:495.16px;font-size:11.6px;color:#333;transform:scaleX(0.9771);">204</span>
<span class="t" style="left:384.90px;top:495.16px;font-size:11.6px;color:#333;transform:scaleX(1.0448);">preflight</span>
<span class="t" style="left:472.60px;top:495.16px;font-size:11.6px;color:#333;transform:scaleX(0.9875);">Preflight</span>
<span class="t" style="left:682.30px;top:495.16px;font-size:11.6px;color:#333;transform:scaleX(0.9077);">0 B</span>
<span class="t" style="left:750.60px;top:495.16px;font-size:11.6px;color:#333;transform:scaleX(0.9440);">374 ms</span>
<span class="t" style="left:19.30px;top:514.84px;font-size:11.6px;color:#333;transform:scaleX(0.9777);">posts</span>
<span class="t" style="left:296.20px;top:514.84px;font-size:11.6px;color:#333;transform:scaleX(0.9771);">201</span>
<span class="t" style="left:384.90px;top:514.84px;font-size:11.6px;color:#333;transform:scaleX(0.9560);">xhr</span>
<span class="t" style="left:472.60px;top:514.84px;font-size:11.6px;color:#333;transform:scaleX(0.9451);text-decoration:underline;text-underline-offset:1px;">xhr.js:177</span>
<span class="t" style="left:667.60px;top:514.84px;font-size:11.6px;color:#333;transform:scaleX(0.9278);">1.2 kB</span>
<span class="t" style="left:750.60px;top:514.84px;font-size:11.6px;color:#333;transform:scaleX(0.9440);">929 ms</span>
<span class="t" style="left:19.30px;top:534.52px;font-size:11.6px;color:#333;transform:scaleX(0.9777);">posts</span>
<span class="t" style="left:296.20px;top:534.52px;font-size:11.6px;color:#333;transform:scaleX(0.9771);">200</span>
<span class="t" style="left:384.90px;top:534.52px;font-size:11.6px;color:#333;transform:scaleX(0.9560);">xhr</span>
<span class="t" style="left:472.60px;top:534.52px;font-size:11.6px;color:#333;transform:scaleX(0.9451);text-decoration:underline;text-underline-offset:1px;">xhr.js:177</span>
<span class="t" style="left:667.60px;top:534.52px;font-size:11.6px;color:#333;transform:scaleX(0.9278);">8.0 kB</span>
<span class="t" style="left:756.40px;top:534.52px;font-size:11.6px;color:#333;transform:scaleX(0.9532);">76 ms</span>
<span class="t" style="left:7.30px;top:567.28px;font-size:11.6px;color:#5a5a5a;transform:scaleX(0.9489);">19 requests</span>
<span class="t" style="left:82.30px;top:567.28px;font-size:11.6px;color:#5a5a5a;transform:scaleX(0.9431);">16.0 kB transferred</span>
<span class="t" style="left:193.30px;top:567.28px;font-size:11.6px;color:#5a5a5a;transform:scaleX(0.9355);">2.6 MB resources</span>
<span class="t" style="left:296.20px;top:567.28px;font-size:11.6px;color:#5a5a5a;transform:scaleX(0.9150);">Finish: 47.96 s</span>
<span class="t" style="left:382.80px;top:567.28px;font-size:11.6px;color:#2a6bd1;transform:scaleX(0.9574);">DOMContentLoaded: 1.11 s</span>
<span class="t" style="left:538.00px;top:567.28px;font-size:11.6px;color:#c43a3a;transform:scaleX(0.9197);">Load: 1.32 s</span>
<span class="t" style="left:997.64px;top:111.19px;font-size:11.0px;color:#fff;font-weight:700;transform:scaleX(1.0163);">at nam consequatur ea labore ea harum</span>
<span class="t" style="left:997.64px;top:126.18px;font-size:11.0px;color:#fff;font-weight:700;transform:scaleX(0.9981);">temporibus sit alias delectus eligendi possimus</span>
<span class="t" style="left:997.64px;top:141.17px;font-size:11.0px;color:#fff;font-weight:700;transform:scaleX(1.0568);">magni</span>
<span class="t" style="left:997.64px;top:156.16px;font-size:11.0px;color:#fff;font-weight:700;transform:scaleX(1.0220);">laboriosam dolor voluptates</span>
<span class="t" style="left:997.64px;top:171.15px;font-size:11.0px;color:#fff;font-weight:700;transform:scaleX(1.0212);">quas fugiat ut perspiciatis vero provident</span>
<span class="t" style="left:997.64px;top:186.14px;font-size:11.0px;color:#fff;font-weight:700;transform:scaleX(1.0376);">quaerat velit veniam amet cupiditate aut</span>
<span class="t" style="left:997.64px;top:201.13px;font-size:11.0px;color:#fff;font-weight:700;transform:scaleX(1.0324);">numquam ut sequi</span>
<span class="t" style="left:997.64px;top:216.12px;font-size:11.0px;color:#fff;font-weight:700;transform:scaleX(1.0209);">id minus libero illum nam ad officiis</span>
<span class="t" style="left:997.64px;top:231.11px;font-size:11.0px;color:#fff;font-weight:700;transform:scaleX(1.0272);">qui qui voluptates illo iste minima</span>
<span class="t" style="left:997.64px;top:246.10px;font-size:11.0px;color:#fff;font-weight:700;transform:scaleX(1.0054);">beatae soluta recusandae</span>
<span class="t" style="left:997.64px;top:261.09px;font-size:11.0px;color:#fff;font-weight:700;transform:scaleX(1.0320);">ratione ex tenetur perferendis</span>
<span class="t" style="left:997.64px;top:276.08px;font-size:11.0px;color:#fff;font-weight:700;transform:scaleX(1.0297);">aut amet sed</span>
<span class="t" style="left:997.64px;top:291.07px;font-size:11.0px;color:#fff;font-weight:700;transform:scaleX(1.0231);">ad iusto omnis odit dolor voluptatibus</span>
<span class="t" style="left:997.64px;top:306.06px;font-size:11.0px;color:#fff;font-weight:700;transform:scaleX(1.0211);">sint soluta et vel magnam aut ut sed qui</span>
<span class="t" style="left:997.64px;top:321.05px;font-size:11.0px;color:#fff;font-weight:700;transform:scaleX(1.0107);">sapiente omnis fugit eos</span>
<span class="t" style="left:997.64px;top:336.04px;font-size:11.0px;color:#fff;font-weight:700;transform:scaleX(1.0044);">nostrum quis quasi placeat</span>
<span class="t" style="left:997.64px;top:351.03px;font-size:11.0px;color:#fff;font-weight:700;transform:scaleX(1.0226);">placeat quia et porro iste</span>
<span class="t" style="left:997.64px;top:366.02px;font-size:11.0px;color:#fff;font-weight:700;transform:scaleX(1.0213);">dolore veritatis porro provident adipisci</span>
<span class="t" style="left:997.64px;top:381.01px;font-size:11.0px;color:#fff;font-weight:700;transform:scaleX(1.0268);">blanditiis et sunt</span>
<span class="t" style="left:997.64px;top:396.00px;font-size:11.0px;color:#fff;font-weight:700;transform:scaleX(0.9917);">optio ipsam molestias necessitatibus occaecati</span>
<span class="t" style="left:1049.54px;top:80.07px;font-size:7.6px;color:#ececec;font-weight:700;transform:scaleX(0.9785);">Home</span>
<span class="t" style="left:1049.54px;top:91.57px;font-size:7.6px;color:#ececec;font-weight:700;transform:scaleX(0.9752);">us</span>
<span class="t" style="left:1090.54px;top:80.07px;font-size:7.6px;color:#ececec;font-weight:700;transform:scaleX(0.9220);">Products</span>
<span class="t" style="left:1078.24px;top:91.57px;font-size:7.6px;color:#ececec;font-weight:700;transform:scaleX(0.9689);">About</span>
<span class="t" style="left:1141.54px;top:80.07px;font-size:7.6px;color:#ececec;font-weight:700;transform:scaleX(0.9430);">Contact</span>
<span class="t" style="left:1241.24px;top:80.27px;font-size:7.6px;color:#fff;font-weight:700;transform:scaleX(1.0049);">1</span>
<span class="t" style="left:999.07px;top:105.23px;font-size:5.4px;color:#a8a8a8;transform:scaleX(0.9560);">7365297896</span>
<span class="t" style="left:1080.93px;top:103.35px;font-size:6.2px;color:#333;transform:scaleX(0.9786);">push</span>
</div>
</body></html>
